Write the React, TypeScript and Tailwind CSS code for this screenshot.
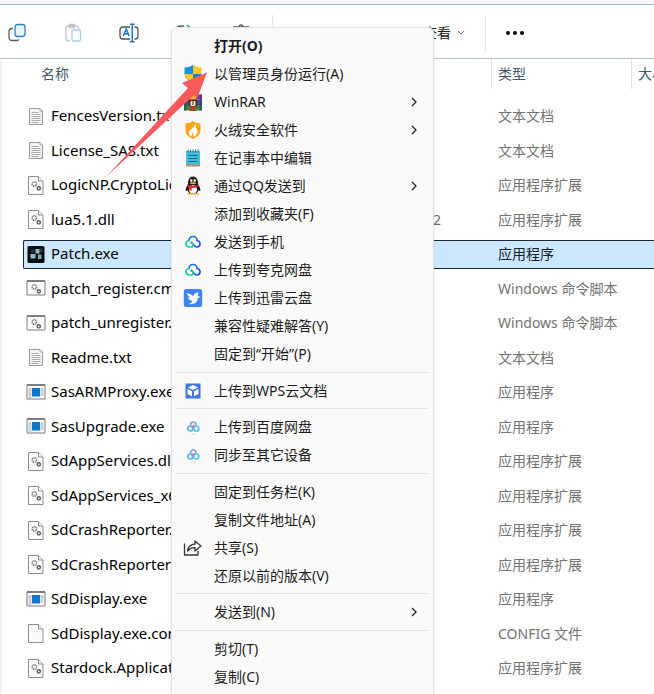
import React from "react";

const FONT = "font-['Noto_Sans','Noto_Sans_CJK_SC',sans-serif]";

type Kind = "txt" | "dll" | "patch" | "cmd" | "exe" | "file";

const files: { name: string; kind: Kind; type: string; date?: string; selected?: boolean }[] = [
  { name: "FencesVersion.txt", kind: "txt", type: "文本文档" },
  { name: "License_SAS.txt", kind: "txt", type: "文本文档" },
  { name: "LogicNP.CryptoLic", kind: "dll", type: "应用程序扩展" },
  { name: "lua5.1.dll", kind: "dll", type: "应用程序扩展", date: "2" },
  { name: "Patch.exe", kind: "patch", type: "应用程序", selected: true },
  { name: "patch_register.cmd", kind: "cmd", type: "Windows 命令脚本" },
  { name: "patch_unregister.cmd", kind: "cmd", type: "Windows 命令脚本" },
  { name: "Readme.txt", kind: "txt", type: "文本文档" },
  { name: "SasARMProxy.exe", kind: "exe", type: "应用程序" },
  { name: "SasUpgrade.exe", kind: "exe", type: "应用程序" },
  { name: "SdAppServices.dll", kind: "dll", type: "应用程序扩展" },
  { name: "SdAppServices_x64", kind: "dll", type: "应用程序扩展" },
  { name: "SdCrashReporter.", kind: "dll", type: "应用程序扩展" },
  { name: "SdCrashReporter64", kind: "dll", type: "应用程序扩展" },
  { name: "SdDisplay.exe", kind: "exe", type: "应用程序" },
  { name: "SdDisplay.exe.config", kind: "file", type: "CONFIG 文件" },
  { name: "Stardock.Applicat", kind: "dll", type: "应用程序扩展" },
  { name: "", kind: "cmd", type: "" },
];

function Gears() {
  return (
    <g fill="none" stroke="#777c80">
      <circle cx="8.300" cy="8" r="2.200" strokeWidth="1.500" strokeDasharray="1.200 .5" />
      <circle cx="12.800" cy="12.300" r="1.600" strokeWidth="1.500" stroke="#5c6064" />
    </g>
  );
}

function FileIcon({ kind }: { kind: Kind }) {
  return (
    <svg viewBox="0 0 20 19" className="h-[19px] w-5 shrink-0" aria-hidden="true">
      {kind === "txt" && (
        <g fill="#f4f4f4" stroke="#9a9a9a">
          <path d="M3.500 1.500H14l2.500 2.500V17.500H3.500z" />
          <path d="M14 1.500V4h2.500M5.500 5.500h7M5.500 7.500h9M5.500 9.500h9M5.500 11.500h9M5.500 13.500h9M5.500 15.500h7" strokeWidth=".8" />
        </g>
      )}
      {(kind === "dll" || kind === "file") && (
        <g fill="#fafafa" stroke="#8b8f92">
          <path d="M2.500 .5H12.500l4.500 4.500V18.500H2.500z" />
          <path d="M12.500 .5V5h4.500" />
        </g>
      )}
      {kind === "dll" && <Gears />}
      {kind === "cmd" && (
        <>
          <path d="M1 2h18v14H1z" fill="#fafafa" stroke="#7b7f82" />
          <path d="M1 2h18" stroke="#7b7f82" strokeWidth="2" />
          <Gears />
        </>
      )}
      {kind === "exe" && (
        <>
          <path d="M1 2h18v14H1z" fill="#fafafa" stroke="#7b7f82" />
          <path d="M1 2h18" stroke="#7b7f82" strokeWidth="2" />
          <path d="M2.500 6h3M2.500 8h3M2.500 10h3M2.500 12h3M2.500 14h3M14.500 6h3M14.500 8h3M14.500 10h3M14.500 12h3" stroke="#85a0b4" strokeWidth=".9" />
          <path d="M6 5h8v8.500H6z" fill="#0f76cc" />
        </>
      )}
      {kind === "patch" && (
        <>
          <rect x="1.500" y="1" width="17" height="17" rx="1.500" fill="#060b0d" />
          <path d="M9.500 4h4v4.500h-4zM4.500 9h5v4.500h-5z" fill="#8fc0c0" />
          <path d="M12 9.500h3.500V14H12z" fill="#7fa9a9" />
          <path d="M14 3.500h2.500V8H14zM5 4.500h3.500V8H5z" fill="#263638" />
        </>
      )}
    </svg>
  );
}

type MenuIconName = "shield" | "rar" | "huorong" | "note" | "qq" | "quark" | "xunlei" | "wps" | "baidu" | "share";

function MenuIcon({ name }: { name?: MenuIconName }) {
  return (
    <svg viewBox="0 0 20 20" className="size-5 shrink-0" aria-hidden="true">
      {name === "shield" && (
        <>
          <path d="M10 1Q6 3.500 1.500 3.500V9.500Q2 16 10 19z" fill="#1492dc" />
          <path d="M10 1q4 2.500 8.500 2.500V9.500Q18 16 10 19z" fill="#fcc81c" />
          <path d="M1.600 10H10v9Q3 16.500 1.600 10z" fill="#fcc81c" />
          <path d="M18.400 10H10v9q7-2.500 8.400-9z" fill="#1583ce" />
        </>
      )}
      {name === "rar" && (
        <>
          <path d="M1 2.500h18v5H1z" fill="#8c3aa0" />
          <path d="M1 7.500h18V13H1z" fill="#3556b0" />
          <path d="M1 13h18v5.500H1z" fill="#2e9145" />
          <path d="M1 2.500h2.500v16H1zM16.500 2.500H19v16h-2.500z" fill="#293047" opacity=".5" />
          <path d="M6.500 3h7v16h-7z" fill="#a44c28" />
          <path d="M7 3.500q0-2.500 3-2.500t3 2.500V8H7z" fill="#edaa35" />
          <rect x="5.500" y="7.500" width="9" height="7" rx="1.500" fill="#5c281b" />
          <rect x="7.500" y="9" width="5" height="5" rx="1" fill="#f4ead6" />
          <path d="M10 9v4" stroke="#9b5e2c" strokeWidth="1.500" />
        </>
      )}
      {name === "huorong" && (
        <>
          <path d="M2.500 3.500Q7 3 10 1q3 2 7.500 2.500V10q0 6-7.500 9-7.500-3-7.500-9z" fill="#f9a51a" />
          <path d="M12.500 3.500Q11.500 7 8 9.500q-3 2.500-1.500 5.500l2 1.800q-.5-3 2-4.800 0 3-.5 5 4.500-2 4.500-6-.5-2.500-1.500-3 .5-1.500-.5-4.500z" fill="#fff" />
        </>
      )}
      {name === "note" && (
        <>
          <path d="M3 3h14v14H3z" fill="#41bedb" />
          <path d="M3 16.500h14v2H3z" fill="#b39074" />
          <path d="M5 1.500v3M7.500 1.500v3M10 1.500v3M12.500 1.500v3M15 1.500v3" stroke="#31738b" />
          <path d="M5.500 7.500h9M5.500 10.500h9M5.500 13.500h9" stroke="#17697f" strokeWidth="1.200" />
        </>
      )}
      {name === "qq" && (
        <>
          <path d="M5 8q0-7.500 5-7.500T15 8q2.500 3.500 2.500 6.500-1 1-2-.5-1 4-5.500 4t-5.500-4q-1 1.500-2 .5Q2.500 11.500 5 8z" fill="#17171b" />
          <ellipse cx="10" cy="13.500" rx="4" ry="4.300" fill="#fff" />
          <ellipse cx="8.300" cy="4.500" rx="1.200" ry="1.600" fill="#fff" />
          <ellipse cx="11.700" cy="4.500" rx="1.200" ry="1.600" fill="#fff" />
          <ellipse cx="10" cy="7.300" rx="3.200" ry="1" fill="#f7a719" />
          <path d="M4.800 8.500q5.200 3 10.400 0l.5 2q-3 1.700-7 1.500v2.500H6.500v-3l-2-1z" fill="#e7252d" />
          <path d="M4 18.500q0-1.500 3-1.500t3 1.500zM10 18.500q0-1.500 3-1.500t3 1.500z" fill="#f3a01d" />
        </>
      )}
      {name === "quark" && (
        <g fill="none" strokeWidth="1.700" strokeLinecap="round">
          <path d="M6 8.500Q6.300 4.500 10 4.500T14 8.500" stroke="#1f73ee" />
          <path d="M14 8.500q3 .3 3 3.300T14 15q-1.700 0-3.500-2.200L8.500 10.500" stroke="#2455e9" />
          <path d="M6 8.500q-3 .5-3 3.300T6 15h2q2 0 2-2T8 11" stroke="#1dd49a" />
        </g>
      )}
      {name === "xunlei" && (
        <>
          <rect x=".8" y="1" width="18.400" height="18" rx="2.500" fill="#3f83f3" />
          <path d="M3.500 5Q7.500 5.500 10 8q1.500-3 5.500-4-1 2.500-.8 4l2.800.8-2.700 1.400Q14.500 14 11 15.500q-3 1-5 .5 3-1 3.500-3-3.500-.5-5-3.500l3 .3Q4.500 8 3.500 5z" fill="#fff" />
        </>
      )}
      {name === "wps" && (
        <>
          <path d="M2.500 2.500h15v15h-15z" fill="#3d79dd" />
          <path d="m10 4 5 2.500-5 2.500-5-2.500zM4.500 8l4.500 2.200v5L4.500 13zM15.500 8 11 10.200v5l4.500-2.200z" fill="#fff" />
        </>
      )}
      {name === "baidu" && (
        <g fill="none" strokeWidth="1.700">
          <circle cx="7.300" cy="11.500" r="2.500" stroke="#4fb9ef" />
          <circle cx="13.300" cy="11.500" r="2.500" stroke="#55c6ee" />
          <path d="M7.500 8.500Q7.500 5 10.300 5T13 8.500" stroke="#79a9de" />
          <path d="m8.500 10.500 3-2" stroke="#e36883" />
          <path d="M8 17h5" stroke="#dedede" strokeWidth="1" />
        </g>
      )}
      {name === "share" && (
        <g fill="none" stroke="#363636" strokeWidth="1.300" strokeLinejoin="round">
          <path d="M1.500 5.500v11.500H15V13" />
          <path d="M12 3v3Q5.500 6.500 4.500 13 7.500 9.500 12 9.700V13l6-5z" />
        </g>
      )}
    </svg>
  );
}

type Item = { label: string; icon?: MenuIconName; sub?: boolean; bold?: boolean };

const groups: Item[][] = [
  [
    { label: "打开(O)", bold: true },
    { label: "以管理员身份运行(A)", icon: "shield" },
    { label: "WinRAR", icon: "rar", sub: true },
    { label: "火绒安全软件", icon: "huorong", sub: true },
    { label: "在记事本中编辑", icon: "note" },
    { label: "通过QQ发送到", icon: "qq", sub: true },
    { label: "添加到收藏夹(F)" },
    { label: "发送到手机", icon: "quark" },
    { label: "上传到夸克网盘", icon: "quark" },
    { label: "上传到迅雷云盘", icon: "xunlei" },
    { label: "兼容性疑难解答(Y)" },
    { label: "固定到“开始”(P)" },
  ],
  [{ label: "上传到WPS云文档", icon: "wps" }],
  [
    { label: "上传到百度网盘", icon: "baidu" },
    { label: "同步至其它设备", icon: "baidu" },
  ],
  [
    { label: "固定到任务栏(K)" },
    { label: "复制文件地址(A)" },
    { label: "共享(S)", icon: "share" },
    { label: "还原以前的版本(V)" },
  ],
  [{ label: "发送到(N)", sub: true }],
  [{ label: "剪切(T)" }, { label: "复制(C)" }, { label: "" }],
];

function ContextMenu() {
  return (
    <div role="menu" className="absolute left-[171px] top-[27px] z-10 w-[263px] rounded-t-md border border-[#e3e3e3] bg-[#fafafa] px-1 shadow-sm">
      {groups.map((items, g) => (
        <div key={g} role="group" className="border-t border-[#e5e5e5] pt-1 first:border-t-0 odd:pb-1 even:pb-[3px]">
          {items.map((item, i) => (
            <button
              key={i}
              role="menuitem"
              className={`flex h-7 w-full items-center pl-[7px] pr-3 text-left text-sm text-[#1c1c1c] ${item.bold ? "font-bold" : ""}`}
            >
              <MenuIcon name={item.icon} />
              <span className="ml-[11px] flex-1 whitespace-nowrap">{item.label}</span>
              {item.sub && (
                <svg viewBox="0 0 6 10" className="h-2.5 w-1.5" fill="none" stroke="#222" strokeWidth="1.300" aria-hidden="true">
                  <path d="m1 1 4 4-4 4" />
                </svg>
              )}
            </button>
          ))}
        </div>
      ))}
    </div>
  );
}

function ToolButton({ label, children }: { label: string; children: React.ReactNode }) {
  return (
    <button aria-label={label} className="flex h-9 w-14 shrink-0 items-center justify-center">
      <svg viewBox="0 0 20 20" className="size-5" fill="none" strokeWidth="1.300" aria-hidden="true">
        {children}
      </svg>
    </button>
  );
}

function Toolbar() {
  return (
    <div className="flex h-[54px] items-center border-b border-[#b3bec4] bg-white pt-0.5">
      <div className="-ml-[11px] flex shrink-0">
        <ToolButton label="复制">
          <path d="M6 5.500H5q-2.500 0-3 2.500v6q0 3.500 3 3.500h5q1.500 0 2-1" stroke="#5a5d60" />
          <rect x="8" y="1.500" width="10" height="12" rx="2.500" stroke="#2f80bf" fill="#e7f2fb" />
        </ToolButton>
        <ToolButton label="粘贴">
          <path d="M7 17.500H4.500Q3 17.500 3 16V4.500Q3 3 4.500 3H14q1.500 0 1.500 1.500V6M6.500 1.500h5v3h-5z" stroke="#c3c6c8" />
          <rect x="9" y="7" width="8.500" height="11" rx="1.500" stroke="#a9cfe9" fill="#fafdff" />
        </ToolButton>
        <ToolButton label="重命名">
          <path d="M11 4H4Q1 4 1 7v6q0 3 3 3h7M15.500 4H16q3 0 3 3v6q0 3-3 3h-.5" stroke="#4e5256" />
          <path d="M13.300 1.500v17M11 1.200h4.600M11 18.800h4.600M4.300 13l2.900-7 2.900 7M5.200 10.700h4" stroke="#1673c8" strokeWidth="1.500" />
        </ToolButton>
        <ToolButton label="共享">
          <path d="M9 3H5Q2 3 2 6v9h13" stroke="#5a5d60" />
          <path d="m12 2 6 5-6 5" stroke="#209084" />
        </ToolButton>
        <ToolButton label="删除">
          <path d="M2 4h16M8 4q0-2 2-2t2 2M4 4l1 14h10l1-14" stroke="#5a5d60" />
        </ToolButton>
      </div>
      <div className="ml-[3px] h-9 w-px bg-[#e6e6e6]" />
      <div className="flex-none basis-[150px]" />
      <button className="flex items-center gap-1.5 text-sm text-[#222]">
        查看
        <svg viewBox="0 0 8 6" className="h-1.5 w-2" fill="none" stroke="#777" aria-hidden="true">
          <path d="m1 1 3 3 3-3" />
        </svg>
      </button>
      <div className="ml-5 h-9 w-px bg-[#e6e6e6]" />
      <button aria-label="更多" className="ml-5 flex h-9 items-center gap-[3px]">
        <span className="size-1 rounded-full bg-black" />
        <span className="size-1 rounded-full bg-black" />
        <span className="size-1 rounded-full bg-black" />
      </button>
    </div>
  );
}

function FileTable() {
  return (
    <table className="w-full table-fixed border-separate border-spacing-0 text-sm">
      <colgroup>
        <col className="w-[21px]" />
        <col className="w-[381px]" />
        <col className="w-[87px]" />
        <col className="w-[140px]" />
        <col />
      </colgroup>
      <thead>
        <tr className="h-[30px] text-left text-[#43586c]">
          <th />
          <th className="p-0 pl-[18px] font-normal">名称</th>
          <th />
          <th className="border-l border-[#e0e3e5] p-0 pl-[6px] font-normal">类型</th>
          <th className="overflow-hidden whitespace-nowrap border-l border-[#e0e3e5] p-0 pl-[6px] font-normal">大小</th>
        </tr>
        <tr className="h-[10px]"><th colSpan={5} className="p-0" /></tr>
      </thead>
      <tbody>
        {files.map((f, i) => {
          const cell = f.selected ? "border-y border-[#1b2933] bg-[#cce8ff]" : "";
          return (
            <tr key={i} className="odd:h-[34px] even:h-[35px]">
              <td className="p-0" />
              <td className="p-0">
                <div className={`flex h-[29px] items-center gap-[5px] overflow-hidden whitespace-nowrap text-[15px] text-black ${f.selected ? "rounded-l-xs border-l pl-0.5" : "pl-[3px]"} ${cell}`}>
                  <FileIcon kind={f.kind} />
                  {f.name}
                </div>
              </td>
              <td className="p-0">
                <div className={`flex h-[29px] items-center pl-[29px] text-[#6b6b6b] ${cell}`}>{f.date}</div>
              </td>
              <td className="p-0">
                <div className={`flex h-[29px] items-center whitespace-nowrap pl-[7px] ${cell} ${f.selected ? "text-[#14202a]" : "text-[#737373]"}`}>{f.type}</div>
              </td>
              <td className="p-0">
                <div className={`h-[29px] ${cell}`} />
              </td>
            </tr>
          );
        })}
      </tbody>
    </table>
  );
}

export default function App() {
  return (
    <div className={`relative h-screen overflow-hidden bg-white ${FONT}`}>
      <div className="h-[5px] border-b border-[#a9c1cb] bg-[#f0f5f9]" />
      <Toolbar />
      <div className="border-l-2 border-[#f2f3f4]">
        <FileTable />
      </div>
      <ContextMenu />
      <svg viewBox="0 0 110 110" className="pointer-events-none absolute left-[100px] top-[70px] z-20 size-[110px]" aria-hidden="true">
        <path d="M107 2.500 82 13 88 18 6 107 94 25 97 28.500z" fill="#fb5a5a" />
      </svg>
    </div>
  );
}
